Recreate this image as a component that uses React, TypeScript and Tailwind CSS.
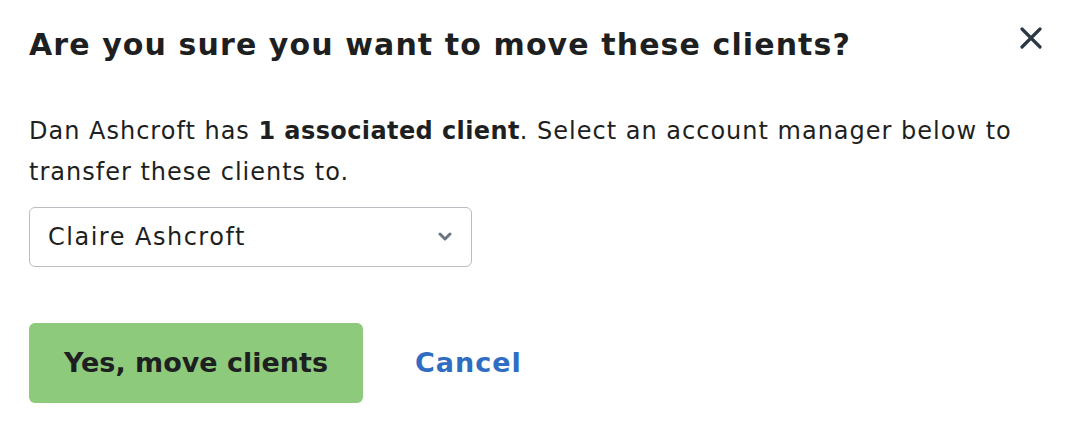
import { useState } from "react";

export default function App() {
    const [manager, setManager] = useState("Claire Ashcroft");

    return (
        <div className="relative h-[428px] w-[1080px] bg-white text-[#1e1f21]" style={{ fontFamily: "'DejaVu Sans', 'Noto Sans', sans-serif" }}>
            <button className="absolute right-[36px] top-[25px] p-[2px] text-[#2c3944]" aria-label="Close">
                <svg width="22" height="22" viewBox="0 0 22 22" fill="none" stroke="currentColor" strokeWidth="3.2" strokeLinecap="round">
                    <path d="M2 2L20 20M20 2L2 20" />
                </svg>
            </button>
            <div className="pl-[29px] pt-[27px]">
                <h1 className="text-[30px] font-bold leading-[36px] tracking-[1.1px]">Are you sure you want to move these clients?</h1>
                <p className="mt-[48px] w-[1030px] text-[24px] leading-[41px] tracking-[1px]">
                    Dan Ashcroft has <span className="font-bold tracking-[0.4px]">1 associated client</span>. Select an account manager below to transfer these clients to.
                </p>
                <div className="relative mt-[14px] w-[443px]">
                    <select
                        value={manager}
                        onChange={(e) => setManager(e.target.value)}
                        className="h-[60px] w-full appearance-none rounded-[6px] border border-[#b9bdc2] bg-white pl-[18px] text-[24px] tracking-[1.5px] text-[#1e1f21] outline-none"
                    >
                        <option>Claire Ashcroft</option>
                        <option>Dan Ashcroft</option>
                    </select>
                    <svg className="pointer-events-none absolute right-[20px] top-[25px]" width="14" height="10" viewBox="0 0 14 10" fill="none" stroke="#6b7680" strokeWidth="3" strokeLinecap="round" strokeLinejoin="round">
                        <path d="M2 2L7 7L12 2" />
                    </svg>
                </div>
                <div className="mt-[56px] flex items-center gap-[52px]">
                    <button className="h-[80px] w-[334px] rounded-[6px] bg-[#8dca7b] text-[27px] font-bold text-[#1e1f21]">Yes, move clients</button>
                    <button className="text-[27px] font-bold tracking-[1px] text-[#2f6dc2]">Cancel</button>
                </div>
            </div>
        </div>
    );
}
